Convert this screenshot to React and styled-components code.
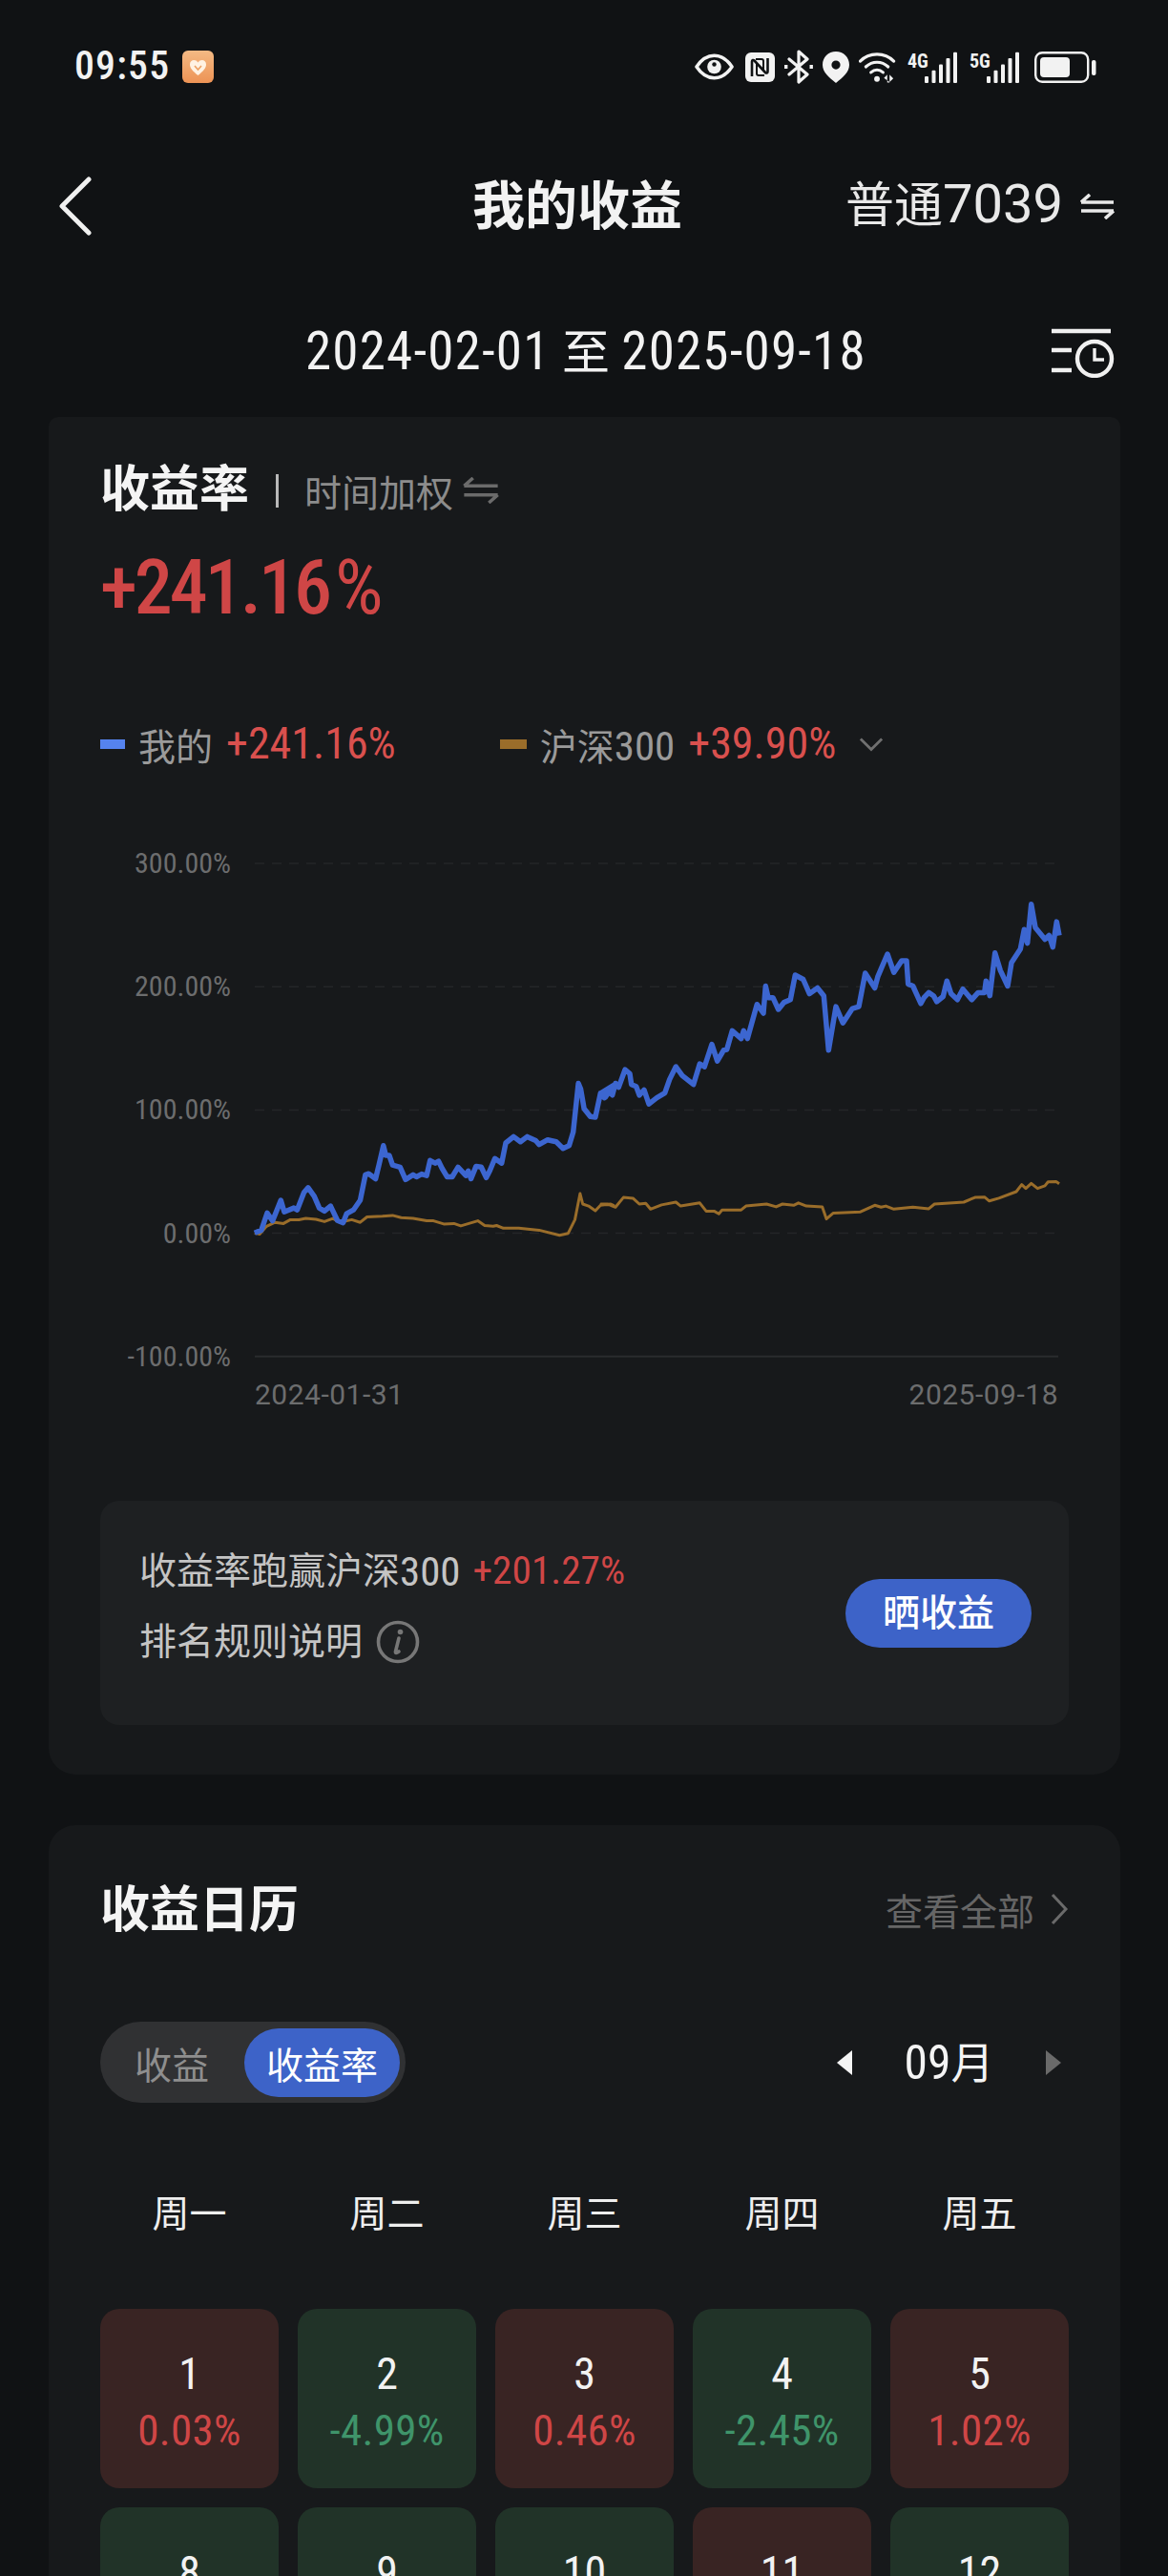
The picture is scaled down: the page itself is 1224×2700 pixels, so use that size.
import React from "react";
import styled, { createGlobalStyle } from "styled-components";

const FONT = `Roboto, "Noto Sans CJK SC", sans-serif`;
const RED = "#cf4646";
const LEGEND_RED = "#d9504e";
const GREEN = "#3f946a";

const Global = createGlobalStyle`
  html, body { margin: 0; padding: 0; background: #101214; }
  body { font-family: ${FONT}; color: #f2f2f2; }
  #root { width: 1224px; height: 2700px; overflow: hidden; }
`;

const Page = styled.div`
  width: 1224px;
  height: 2700px;
  background: #101214;
  overflow: hidden;
`;

/* digits in the reference are narrower and taller than the CJK beside them */
const Num = styled.span`
  font-size: ${(p) => p.$s || 1.1}em;
  font-stretch: ${(p) => p.$st || 85}%;
  letter-spacing: ${(p) => p.$ls || 0}px;
  line-height: 1;
`;

/* status bar */
const StatusBar = styled.div`
  height: 140px;
  padding: 0 75px 0 78px;
  box-sizing: border-box;
  display: flex;
  align-items: center;
  justify-content: space-between;
`;
const StatusLeft = styled.div`
  display: flex;
  align-items: center;
  gap: 13px;
`;
const Time = styled.span`
  font-size: 38px;
  font-weight: 500;
  line-height: 44px;
`;
const StatusRight = styled.div`
  display: flex;
  align-items: center;
  gap: 10px;
`;
const EyeWrap = styled.div`
  display: flex;
  margin-right: 2px;
`;

/* nav */
const Nav = styled.div`
  height: 152px;
  padding: 0 56px 0 62px;
  display: grid;
  grid-template-columns: 1fr auto 1fr;
  align-items: center;
`;
const BackBtn = styled.div`
  display: flex;
  align-items: center;
`;
const Title = styled.h1`
  margin: 0 0 0 -20px;
  font-size: 55px;
  font-weight: 700;
  line-height: 64px;
`;
const Account = styled.div`
  justify-self: end;
  display: flex;
  align-items: center;
  gap: 18px;
  font-size: 51px;
  line-height: 60px;
  font-weight: 400;
  color: #e8e8e8;
`;

/* date */
const DateRow = styled.div`
  height: 145px;
  padding: 11px 56px 0 320px;
  display: flex;
  align-items: center;
  justify-content: space-between;
  box-sizing: border-box;
`;
const DateText = styled.div`
  font-size: 50px;
  line-height: 60px;
  font-weight: 400;
`;

/* cards */
const Card = styled.section`
  margin: 0 50px 0 51px;
  width: 1123px;
  box-sizing: border-box;
  background: #17191b;
  border-radius: ${(p) => (p.$flatTop ? "10px 10px 28px 28px" : "28px")};
  padding: 0 54px;
  height: ${(p) => p.$height}px;
  overflow: hidden;
`;
const Section2 = styled.div`
  margin-top: 53px;
`;
const RateHead = styled.div`
  padding-top: 48px;
  display: flex;
  align-items: center;
  height: 58px;
`;
const Heading = styled.h2`
  margin: 0;
  font-size: 52px;
  line-height: 58px;
  font-weight: 700;
  color: #f4f4f4;
`;
const Sep = styled.i`
  width: 3px;
  height: 35px;
  background: #b8b8b8;
  margin: 0 27px 0 28px;
`;
const Weighted = styled.span`
  font-size: 39px;
  color: #8c8c8c;
  margin-right: 10px;
`;
const BigRate = styled.div`
  margin-top: 28px;
  font-size: 80px;
  line-height: 90px;
  font-weight: 500;
  font-stretch: 75%;
  letter-spacing: -3px;
  color: ${RED};
  display: flex;
`;
const Pct = styled.span`
  margin-left: ${(p) => p.$gap || 6}px;
  font-weight: 400;
`;
const Legend = styled.div`
  margin-top: 95px;
  height: 48px;
  display: flex;
  align-items: center;
  font-size: 39px;
  color: #9a9a9a;
`;
const Swatch = styled.i`
  width: ${(p) => p.$w}px;
  height: 10px;
  background: ${(p) => p.$color};
  margin: 0 14px 0 ${(p) => p.$left || 0}px;
`;
const LegendName = styled.span`
  margin-right: ${(p) => p.$after}px;
`;
const LegendValue = styled.span`
  color: ${LEGEND_RED};
  margin-right: ${(p) => p.$after}px;
`;

/* chart */
const Chart = styled.div`
  margin-top: 81px;
  margin-left: -54px;
  width: 1123px;
  display: grid;
  grid-template-columns: 191px 1fr;
  color: #6c6d6e;
  font-size: 30px;
`;
const YAxis = styled.div`
  height: 538px;
  display: flex;
  flex-direction: column;
  flex-wrap: nowrap;
  font-stretch: 85%;
`;
const YLabel = styled.div`
  flex: none;
  height: 129.2px;
  line-height: 40px;
  text-align: right;
`;
const XAxis = styled.div`
  grid-column: 2;
  margin: 19px 0 0 25px;
  width: 842px;
  display: flex;
  justify-content: space-between;
  line-height: 40px;
  letter-spacing: 0.5px;
`;
const Plot = styled.svg`
  display: block;
  margin-left: 25px;
  overflow: visible;
`;

/* compare panel */
const Panel = styled.div`
  margin-top: 91px;
  height: 235px;
  box-sizing: border-box;
  background: #1e2022;
  border-radius: 20px;
  padding: 50px 39px 0 41px;
  display: flex;
  justify-content: space-between;
`;
const PanelText = styled.div`
  font-size: 39px;
  line-height: 48px;
  color: #c4c4c4;
`;
const PanelRow = styled.div`
  display: flex;
  align-items: center;
  gap: ${(p) => p.$gap || 0}px;
  margin-bottom: 26px;
`;
const PanelRed = styled.span`
  color: ${RED};
  margin-left: 13px;
`;
const Share = styled.button`
  align-self: center;
  margin-top: -50px;
  width: 195px;
  height: 72px;
  border: 0;
  border-radius: 36px;
  background: #3d63c8;
  color: #fff;
  font: 500 39px/48px ${FONT};
  padding: 0;
`;

/* calendar */
const CalHead = styled.div`
  height: 62px;
  padding-top: 59px;
  display: flex;
  align-items: center;
  justify-content: space-between;
`;
const ViewAll = styled.div`
  display: flex;
  align-items: center;
  gap: 16px;
  margin-top: -4px;
  font-size: 39px;
  color: #666;
`;
const Controls = styled.div`
  margin-top: 85px;
  display: flex;
  align-items: center;
  justify-content: space-between;
`;
const Toggle = styled.div`
  height: 85px;
  width: 320px;
  box-sizing: border-box;
  padding: 0 6px 0 36px;
  border-radius: 43px;
  background: #303133;
  display: flex;
  align-items: center;
  justify-content: space-between;
  font-size: 39px;
`;
const ToggleOff = styled.span`
  color: #8e8e8e;
`;
const ToggleOn = styled.span`
  width: 163px;
  height: 72px;
  border-radius: 36px;
  background: #3d63c8;
  color: #fff;
  display: flex;
  align-items: center;
  justify-content: center;
`;
const Month = styled.div`
  display: flex;
  align-items: center;
  margin-right: 8px;
  font-size: 45px;
  color: #f4f4f4;
`;
const MonthText = styled.span`
  width: 203px;
  text-align: center;
  margin-top: -4px;
`;
const Grid = styled.div`
  display: grid;
  grid-template-columns: repeat(5, 1fr);
  column-gap: 20px;
  row-gap: 20px;
`;
const WeekRow = styled(Grid)`
  margin-top: 92px;
  height: 50px;
  font-size: 39px;
  line-height: 50px;
  text-align: center;
  color: #eeeeee;
`;
const Days = styled(Grid)`
  margin-top: 74px;
`;
const Day = styled.div`
  height: 188px;
  border-radius: 20px;
  background: ${(p) => (p.$up ? "#392423" : "#213328")};
  display: flex;
  flex-direction: column;
  align-items: center;
  padding-top: 43px;
  box-sizing: border-box;
`;
const DayNum = styled.div`
  font-size: 46px;
  line-height: 50px;
  font-weight: 400;
  font-stretch: 80%;
  color: #f2f2f2;
`;
const DayRate = styled.div`
  margin-top: 10px;
  font-size: 45px;
  line-height: 50px;
  font-weight: 400;
  font-stretch: 85%;
  letter-spacing: 0.3px;
  color: ${(p) => (p.$up ? RED : GREEN)};
`;

/* icons */
const Eye = () => (
  <svg width="41" height="28" viewBox="0 0 42 28">
    <path d="M2 14C8 5 14 2 21 2s13 3 19 12c-6 9-12 12-19 12S8 23 2 14Z" fill="none" stroke="#f2f2f2" strokeWidth="3.6" strokeLinejoin="round" />
    <circle cx="21" cy="14" r="7.5" fill="#f2f2f2" />
    <circle cx="21" cy="11.5" r="2.3" fill="#101214" />
  </svg>
);
const Nfc = () => (
  <svg width="31" height="31" viewBox="0 0 31 31">
    <rect width="31" height="31" rx="6" fill="#f2f2f2" />
    <path d="M7 25V9.5c0-1.5 1.5-2 2.5-1L21 21c1 1 2.5.5 2.5-1V6" fill="none" stroke="#101214" strokeWidth="2.6" />
    <path d="M11 7h6c1.5 0 2 1 2 2v10M20 24h-6c-1.5 0-2-1-2-2V12" fill="none" stroke="#101214" strokeWidth="2" />
  </svg>
);
const Bluetooth = () => (
  <svg width="30" height="36" viewBox="0 0 30 36">
    <path d="M5 10l19 16-9 8V2l9 8L5 26" fill="none" stroke="#f2f2f2" strokeWidth="3.2" strokeLinejoin="round" strokeLinecap="round" />
    <rect x="0" y="16" width="3.4" height="4" fill="#f2f2f2" />
    <rect x="26.5" y="16" width="3.4" height="4" fill="#f2f2f2" />
  </svg>
);
const Pin = () => (
  <svg width="28" height="33" viewBox="0 0 28 33">
    <path fillRule="evenodd" d="M14 0c8 0 14 6 14 14 0 8-7 13-14 19C7 27 0 22 0 14 0 6 6 0 14 0Zm0 9.5a4.6 4.6 0 1 0 0 9.2 4.6 4.6 0 0 0 0-9.2Z" fill="#f2f2f2" />
  </svg>
);
const Wifi = () => (
  <svg width="41" height="33" viewBox="0 0 42 33">
    <g fill="none" stroke="#f2f2f2" strokeWidth="3.2" strokeLinecap="round">
      <path d="M1.5 10C11 0 28 0 37.5 10" />
      <path d="M7.5 16c7-6.5 17-6.5 24 0" />
      <path d="M13 22c4-3.5 9-3.5 13 0" />
    </g>
    <circle cx="19.5" cy="29" r="3" fill="#f2f2f2" />
    <path d="M27 28l3.5-3.5V33H33v-8.5l4 4-4 4" fill="#f2f2f2" />
  </svg>
);
const SignalWrap = styled.div`
  display: flex;
  align-items: flex-end;
  margin-right: ${(p) => p.$mr}px;
`;
const SignalLabel = styled.span`
  font: 700 20px/20px ${FONT};
  font-stretch: 75%;
  width: 18px;
  margin-bottom: 13px;
  color: #f2f2f2;
  white-space: nowrap;
`;
const Signal = ({ label, mr }) => (
  <SignalWrap $mr={mr}>
    <SignalLabel>{label}</SignalLabel>
    <svg width="35" height="33" viewBox="0 0 35 33">
      {[0, 7.5, 15, 22.5, 30].map((x, i) => (
        <rect key={x} x={x} y={26 - i * 6.3} width="4" height={7 + i * 6.3} rx="1" fill="#f2f2f2" />
      ))}
    </svg>
  </SignalWrap>
);
const Battery = () => (
  <svg width="65" height="33" viewBox="0 0 65 33">
    <rect x="1.2" y="1.2" width="55" height="30.6" rx="7" fill="none" stroke="#f2f2f2" strokeWidth="2.4" />
    <rect x="6" y="6" width="31" height="21" rx="4" fill="#f2f2f2" />
    <rect x="60" y="9" width="4.5" height="16" rx="2" fill="#f2f2f2" />
  </svg>
);
const HeartBadge = () => (
  <svg width="33" height="34" viewBox="0 0 33 34">
    <defs>
      <linearGradient id="hb" x1="0" y1="0" x2="0" y2="1">
        <stop offset="0" stopColor="#f4ba84" />
        <stop offset="1" stopColor="#ed9355" />
      </linearGradient>
    </defs>
    <rect width="33" height="34" rx="6" fill="url(#hb)" />
    <path d="M16.5 26C11 21.5 8 18.5 8 14.5 8 9.5 14 8.5 16.5 12.5 19 8.5 25 9.5 25 14.5c0 4-3 7-8.5 11.5Z" fill="#fff2e2" />
    <path d="M13 16l3.5 4 3.5-4" fill="none" stroke="#eda062" strokeWidth="1.6" />
  </svg>
);
const Chevron = () => (
  <svg width="34" height="62" viewBox="0 0 34 62">
    <path d="M31 3L3 31l28 28" fill="none" stroke="#f0f0f0" strokeWidth="5" strokeLinecap="round" strokeLinejoin="round" />
  </svg>
);
const Swap = ({ w = 36, h = 27, color = "#e8e8e8", sw = 3.6 }) => (
  <svg width={w} height={h} viewBox="0 0 36 27">
    <path d="M1 9h34M1 9l9-8M35 18H1M35 18l-9 8" fill="none" stroke={color} strokeWidth={sw} />
  </svg>
);
const HistoryIcon = () => (
  <svg width="66" height="52" viewBox="0 0 66 52">
    <g fill="none" stroke="#f0f0f0" strokeWidth="4.4">
      <path d="M0 3h62M0 23h21M0 44h21" />
      <circle cx="45" cy="32" r="18" />
      <path d="M45 21v12h10" strokeWidth="3.4" />
    </g>
  </svg>
);
const InfoIcon = () => (
  <svg width="46" height="46" viewBox="0 0 46 46">
    <circle cx="23" cy="23" r="20.5" fill="none" stroke="#777" strokeWidth="3.6" />
    <circle cx="25.5" cy="12.5" r="2.8" fill="#777" />
    <path d="M24 19l-3.5 14c-.4 1.6.6 2.2 3.5 0" fill="none" stroke="#777" strokeWidth="3.6" strokeLinecap="round" />
  </svg>
);
const SmallChevronDown = () => (
  <svg width="26" height="16" viewBox="0 0 28 16">
    <path d="M2 2l12 12L26 2" fill="none" stroke="#707070" strokeWidth="3" />
  </svg>
);
const SmallChevronRight = () => (
  <svg width="20" height="34" viewBox="0 0 20 34">
    <path d="M3 2l14 15L3 32" fill="none" stroke="#6a6a6a" strokeWidth="3" />
  </svg>
);
const Caret = ({ dir, color }) => (
  <svg width="16" height="26" viewBox="0 0 16 26">
    <path d={dir === "l" ? "M16 0v26L0 13Z" : "M0 0v26l16-13Z"} fill={color} />
  </svg>
);

/* chart traces: sampled from the picture, in two crops */
const blueL = [[495,1059],[515,1052],[532,1008],[548,1028],[572,975],[582,1005],[610,995],[620,1000],[640,955],[652,943],[670,965],[685,995],[700,1003],[718,990],[738,1027],[755,1033],[765,1010],[785,1000],[805,975],[820,910],[830,907],[850,920],[860,885],[873,835],[880,860],[890,860],[900,885],[922,890],[938,922],[960,910],[970,915],[985,908],[1000,912],[1010,873],[1025,880],[1035,875],[1045,893],[1060,915],[1075,915],[1092,890],[1115,912],[1122,900],[1130,920],[1145,888],[1160,890],[1175,917],[1185,900],[1200,868],[1220,880],[1232,828],[1255,812],[1275,825],[1295,812],[1320,822],[1330,832],[1355,820],[1380,825],[1400,842],[1418,835],[1430,800],[1445,675],[1452,690],[1462,740],[1480,760],[1495,762],[1510,700],[1525,710],[1548,680]];
const blueR = [[0,700],[10,712],[25,695],[35,705],[45,675],[55,685],[75,640],[90,650],[95,678],[110,683],[120,705],[135,692],[150,728],[175,712],[200,700],[215,665],[235,632],[255,655],[290,678],[310,625],[325,632],[348,575],[365,618],[385,590],[395,588],[412,540],[440,560],[448,540],[460,560],[490,472],[510,495],[517,425],[525,455],[540,455],[557,485],[575,467],[595,460],[610,397],[635,408],[655,445],[680,430],[700,450],[715,590],[738,478],[760,520],[790,483],[810,478],[830,392],[860,430],[870,400],[900,343],[920,390],[945,360],[960,360],[965,420],[980,425],[1005,470],[1015,455],[1030,442],[1045,450],[1055,465],[1075,452],[1087,412],[1100,445],[1120,460],[1137,433],[1165,460],[1185,442],[1205,442],[1210,412],[1222,450],[1238,340],[1255,385],[1278,425],[1290,365],[1318,330],[1330,280],[1340,315],[1352,215],[1365,275],[1395,305],[1408,295],[1420,325],[1432,260],[1440,295]];
const goldL = [[495,1059],[510,1062],[530,1042],[555,1032],[580,1035],[600,1025],[625,1025],[645,1022],[675,1024],[700,1030],[725,1022],[745,1032],[780,1025],[805,1032],[825,1018],[870,1016],[900,1014],[925,1020],[960,1022],[1000,1028],[1020,1028],[1050,1036],[1080,1035],[1100,1041],[1150,1028],[1170,1040],[1195,1042],[1205,1040],[1225,1047],[1270,1047],[1330,1052],[1390,1065],[1415,1060],[1435,1025],[1450,958],[1458,985],[1475,990],[1495,1002],[1510,988],[1540,985],[1548,988]];
const goldR = [[0,985],[20,985],[45,993],[70,968],[100,970],[120,985],[140,983],[155,998],[190,987],[235,980],[250,990],[310,982],[330,1003],[355,1003],[370,1010],[380,1000],[440,1000],[455,990],[520,985],[550,992],[570,985],[605,988],[620,982],[645,990],[695,992],[708,1023],[730,1008],[815,1005],[860,988],[880,993],[895,990],[920,998],[980,993],[1030,997],[1048,985],[1140,980],[1175,968],[1205,967],[1220,977],[1250,970],[1305,953],[1322,935],[1335,945],[1352,932],[1372,945],[1395,938],[1405,928],[1430,927],[1440,933]];
const PLOT_X = 267;
const PLOT_Y = 905;
const trace = (l, r) =>
  [
    ...l.map(([x, y]) => [90 + x / 2.8, 860 + y / 2.45]),
    ...r.map(([x, y]) => [630 + x / 3, 860 + y / 2.45]),
  ]
    .map(([x, y]) => `${(x - PLOT_X).toFixed(1)},${(y - PLOT_Y + 20).toFixed(1)}`)
    .join(" ");

const PlotChart = () => (
  <Plot width="842" height="538" viewBox="0 0 842 538">
    {[0, 1, 2, 3].map((i) => (
      <line key={i} x1="0" x2="842" y1={20 + i * 129.2} y2={20 + i * 129.2} stroke="#242628" strokeWidth="1.5" strokeDasharray="10 8" />
    ))}
    <line x1="0" x2="842" y1={20 + 4 * 129.2} y2={20 + 4 * 129.2} stroke="#2a2c2e" strokeWidth="2" />
    <polyline points={trace(goldL, goldR)} fill="none" stroke="#9a6d2a" strokeWidth="3" strokeLinejoin="round" />
    <polyline points={trace(blueL, blueR)} fill="none" stroke="#3c66d0" strokeWidth="5.5" strokeLinejoin="round" />
  </Plot>
);

const week = ["周一", "周二", "周三", "周四", "周五"];
const days = [
  { n: 1, r: "0.03%", up: true },
  { n: 2, r: "-4.99%" },
  { n: 3, r: "0.46%", up: true },
  { n: 4, r: "-2.45%" },
  { n: 5, r: "1.02%", up: true },
  { n: 8 },
  { n: 9 },
  { n: 10 },
  { n: 11, up: true },
  { n: 12 },
];

export default function App() {
  return (
    <Page>
      <Global />
      <StatusBar>
        <StatusLeft>
          <Time><Num $ls={1.2}>09:55</Num></Time>
          <HeartBadge />
        </StatusLeft>
        <StatusRight>
          <EyeWrap><Eye /></EyeWrap>
          <Nfc />
          <Bluetooth />
          <Pin />
          <Wifi />
          <Signal label="4G" mr={2} />
          <Signal label="5G" mr={5} />
          <Battery />
        </StatusRight>
      </StatusBar>
      <Nav>
        <BackBtn>
          <Chevron />
        </BackBtn>
        <Title>我的收益</Title>
        <Account>
          <span>普通<Num $st={92}>7039</Num></span>
          <Swap />
        </Account>
      </Nav>
      <DateRow>
        <DateText><Num $ls={1.2}>2024-02-01</Num> 至 <Num $ls={1.2}>2025-09-18</Num></DateText>
        <HistoryIcon />
      </DateRow>
      <Card $flatTop $height={1423}>
        <RateHead>
          <Heading>收益率</Heading>
          <Sep />
          <Weighted>时间加权</Weighted>
          <Swap w={38} h={28} color="#6b6b6b" sw={3.4} />
        </RateHead>
        <BigRate>
          +241.16<Pct>%</Pct>
        </BigRate>
        <Legend>
          <Swatch $w={26} $color="#5583ee" />
          <LegendName $after={14}>我的</LegendName>
          <LegendValue $after={109}><Num $s={1.18} $st={80}>+241.16%</Num></LegendValue>
          <Swatch $w={28} $color="#9a6d2a" />
          <LegendName $after={14}>沪深<Num>300</Num></LegendName>
          <LegendValue $after={24}><Num $s={1.18} $st={80}>+39.90%</Num></LegendValue>
          <SmallChevronDown />
        </Legend>
        <Chart>
          <YAxis>
            <YLabel>300.00%</YLabel>
            <YLabel>200.00%</YLabel>
            <YLabel>100.00%</YLabel>
            <YLabel>0.00%</YLabel>
            <YLabel>-100.00%</YLabel>
          </YAxis>
          <PlotChart />
          <XAxis>
            <span>2024-01-31</span>
            <span>2025-09-18</span>
          </XAxis>
        </Chart>
        <Panel>
          <PanelText>
            <PanelRow>
              收益率跑赢沪深<Num>300</Num><PanelRed><Num $s={1.06} $st={80}>+201.27%</Num></PanelRed>
            </PanelRow>
            <PanelRow $gap={14}>
              排名规则说明
              <InfoIcon />
            </PanelRow>
          </PanelText>
          <Share>晒收益</Share>
        </Panel>
      </Card>
      <Section2>
        <Card $height={900}>
          <CalHead>
            <Heading>收益日历</Heading>
            <ViewAll>
              查看全部
              <SmallChevronRight />
            </ViewAll>
          </CalHead>
          <Controls>
            <Toggle>
              <ToggleOff>收益</ToggleOff>
              <ToggleOn>收益率</ToggleOn>
            </Toggle>
            <Month>
              <Caret dir="l" color="#f4f4f4" />
              <MonthText><Num>09</Num>月</MonthText>
              <Caret dir="r" color="#6a6a6a" />
            </Month>
          </Controls>
          <WeekRow>
            {week.map((w) => (
              <div key={w}>{w}</div>
            ))}
          </WeekRow>
          <Days>
            {days.map((d) => (
              <Day key={d.n} $up={d.up}>
                <DayNum>{d.n}</DayNum>
                {d.r && <DayRate $up={d.up}>{d.r}</DayRate>}
              </Day>
            ))}
          </Days>
        </Card>
      </Section2>
    </Page>
  );
}
